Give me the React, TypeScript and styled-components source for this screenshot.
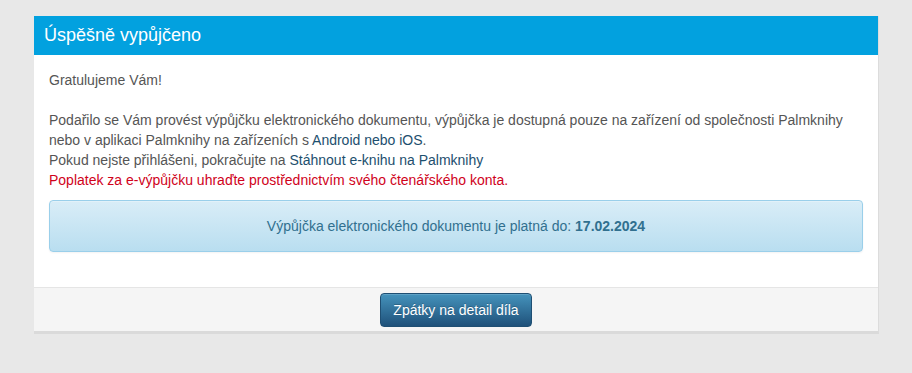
import React from 'react';
import styled, { createGlobalStyle } from 'styled-components';

const GlobalStyle = createGlobalStyle`
  html, body {
    margin: 0;
    padding: 0;
    background: #e8e8e8;
  }
  body {
    font-family: 'Liberation Sans', Arial, Helvetica, sans-serif;
    font-size: 14px;
    line-height: 20px;
    color: #555555;
  }
`;

const Page = styled.div`
  padding: 16px 33px 40px 34px;
  height: 373px;
  box-sizing: border-box;
`;

const Modal = styled.div`
  background: #ffffff;
  border-right: 1px solid #dcdcdc;
  border-bottom: 3px solid #dadada;
`;

const Header = styled.div`
  background: #02a1df;
  color: #ffffff;
  padding: 9px 10px 10px;
`;

const Title = styled.h4`
  margin: 0;
  font-size: 18px;
  font-weight: normal;
  line-height: 20px;
`;

const Body = styled.div`
  padding: 15px;
`;

const Paragraph = styled.p<{ gap?: number }>`
  margin: 0 0 ${p => p.gap ?? 10}px;
`;

const Link = styled.a`
  color: #1d4f6e;
  text-decoration: none;
`;

const Warning = styled.span`
  color: #d0021b;
`;

const Alert = styled.div`
  margin-bottom: 20px;
  padding: 15px;
  border: 1px solid #9acfea;
  border-radius: 4px;
  background: linear-gradient(to bottom, #d9edf7 0%, #b9def0 100%);
  color: #31708f;
  text-align: center;
  box-shadow: inset 0 1px 0 rgba(255, 255, 255, 0.25), 0 1px 2px rgba(0, 0, 0, 0.05);
  strong {
    font-weight: bold;
  }
`;

const Footer = styled.div`
  border-top: 1px solid #e5e5e5;
  background: #f5f5f5;
  padding: 5px 15px 4px;
  text-align: center;
`;

const Button = styled.button`
  font-family: inherit;
  font-size: 14px;
  line-height: 20px;
  color: #ffffff;
  padding: 6px 12px;
  border: 1px solid #1f4f73;
  border-radius: 4px;
  background: linear-gradient(to bottom, #4593bc 0%, #1f517a 100%);
  text-shadow: 0 -1px 0 rgba(0, 0, 0, 0.2);
  box-shadow: inset 0 1px 0 rgba(255, 255, 255, 0.15);
  cursor: pointer;
`;

const App = () => {
  return (
    <>
      <GlobalStyle />
      <Page>
        <Modal>
          <Header>
            <Title>Úspěšně vypůjčeno</Title>
          </Header>
          <Body>
            <Paragraph gap={20}>Gratulujeme Vám!</Paragraph>
            <Paragraph>
              Podařilo se Vám provést výpůjčku elektronického dokumentu, výpůjčka je dostupná pouze na
              zařízení od společnosti Palmknihy nebo v aplikaci Palmknihy na zařízeních s{' '}
              <Link href="#">Android nebo iOS</Link>.
              <br />
              Pokud nejste přihlášeni, pokračujte na <Link href="#">Stáhnout e-knihu na Palmknihy</Link>
              <br />
              <Warning>Poplatek za e-výpůjčku uhraďte prostřednictvím svého čtenářského konta.</Warning>
            </Paragraph>
            <Alert>
              Výpůjčka elektronického dokumentu je platná do: <strong>17.02.2024</strong>
            </Alert>
          </Body>
          <Footer>
            <Button type="button">Zpátky na detail díla</Button>
          </Footer>
        </Modal>
      </Page>
    </>
  );
};

export default App;
